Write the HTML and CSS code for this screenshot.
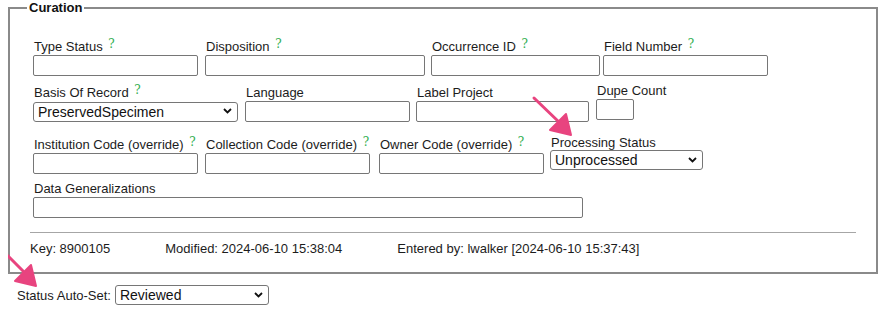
FILE: index.html
```html
<!DOCTYPE html>
<html lang="en">

<head>
    <meta charset="UTF-8">
    <title>Curation</title>
    <link rel="stylesheet" href="styles.css">
</head>

<body>

    <form class="record-form">
        <fieldset class="curation">
            <legend>Curation</legend>

            <div class="field-row">
                <div class="field f-type">
                    <label>Type Status <sup class="help">?</sup></label>
                    <input type="text">
                </div>
                <div class="field f-disp">
                    <label>Disposition <sup class="help">?</sup></label>
                    <input type="text">
                </div>
                <div class="field f-occ">
                    <label>Occurrence ID <sup class="help">?</sup></label>
                    <input type="text">
                </div>
                <div class="field f-fieldnum">
                    <label>Field Number <sup class="help">?</sup></label>
                    <input type="text">
                </div>
            </div>

            <div class="field-row row-2">
                <div class="field f-basis">
                    <label>Basis Of Record <sup class="help">?</sup></label>
                    <span class="select-wrap">
                        <select>
                            <option>PreservedSpecimen</option>
                        </select>
                        <svg class="chevron" width="9" height="6" viewBox="0 0 9 6"><path d="M1 1 L4.5 4.5 L8 1" fill="none" stroke="#111" stroke-width="1.8"/></svg>
                    </span>
                </div>
                <div class="field f-lang">
                    <label>Language</label>
                    <input type="text">
                </div>
                <div class="field f-labelproj">
                    <label>Label Project</label>
                    <input type="text">
                </div>
                <div class="field f-dupe">
                    <label>Dupe Count</label>
                    <input type="text">
                </div>
            </div>

            <div class="field-row row-3">
                <div class="field f-inst">
                    <label>Institution Code (override) <sup class="help">?</sup></label>
                    <input type="text">
                </div>
                <div class="field f-coll">
                    <label>Collection Code (override) <sup class="help">?</sup></label>
                    <input type="text">
                </div>
                <div class="field f-owner">
                    <label>Owner Code (override) <sup class="help">?</sup></label>
                    <input type="text">
                </div>
                <div class="field f-proc">
                    <label>Processing Status</label>
                    <span class="select-wrap">
                        <select>
                            <option>Unprocessed</option>
                        </select>
                        <svg class="chevron" width="9" height="6" viewBox="0 0 9 6"><path d="M1 1 L4.5 4.5 L8 1" fill="none" stroke="#111" stroke-width="1.8"/></svg>
                    </span>
                </div>
            </div>

            <div class="field-row row-4">
                <div class="field f-datagen">
                    <label>Data Generalizations</label>
                    <input type="text">
                </div>
            </div>

            <hr>

            <div class="record-meta">
                <span>Key: 8900105</span>
                <span>Modified: 2024-06-10 15:38:04</span>
                <span>Entered by: lwalker [2024-06-10 15:37:43]</span>
            </div>
        </fieldset>

        <div class="auto-set">
            <label>Status Auto-Set:</label>
            <span class="select-wrap">
                <select>
                    <option>Reviewed</option>
                </select>
                <svg class="chevron" width="9" height="6" viewBox="0 0 9 6"><path d="M1 1 L4.5 4.5 L8 1" fill="none" stroke="#111" stroke-width="1.8"/></svg>
            </span>
        </div>
    </form>

    <!-- annotation arrows -->
    <svg class="annotations" width="887" height="312" viewBox="0 0 887 312">
        <g fill="#e8447f" stroke="#e8447f" stroke-linecap="round" stroke-linejoin="round">
            <line x1="534" y1="98" x2="560" y2="123" stroke-width="3"/>
            <polygon points="571,135 550,130 566,114" stroke-width="2"/>
            <line x1="-2" y1="246" x2="24" y2="272" stroke-width="3"/>
            <polygon points="36,286 15,281 31,265" stroke-width="2"/>
        </g>
    </svg>

</body>

</html>
```

FILE: styles.css
```css
body {
    font-family: "Liberation Sans", Arial, sans-serif;
    font-size: 13px;
    color: #1c1c1c;
    background-color: #fff;
    margin: 0 9px 0 8px;
    position: relative;
}

.curation {
    margin: 0;
    border: 2px solid #8a8a8a;
    padding: 24px 20px 16px 20px;
}

.curation legend {
    font-weight: bold;
    color: #111;
    padding: 0 2px;
    margin-left: -3px;
    line-height: 15px;
}

.field-row {
    display: flex;
    align-items: flex-end;
    padding-left: 3px;
}

.row-2 {
    margin-top: 9px;
}

.row-3 {
    margin-top: 15px;
}

.row-4 {
    margin-top: 7px;
}

.field {
    display: flex;
    flex-direction: column;
    align-items: flex-start;
    flex: none;
}

.field label {
    line-height: 15px;
    height: 15px;
    white-space: nowrap;
    padding-left: 1px;
    margin-bottom: 1px;
}

.help {
    font-family: "DejaVu Serif", "Liberation Serif", serif;
    font-size: 12px;
    color: #2fae4e;
    line-height: 0;
    vertical-align: 3px;
    margin-left: 2px;
}

input[type="text"] {
    box-sizing: border-box;
    width: 165px;
    height: 21px;
    margin: 0;
    padding: 0 3px;
    border: 1px solid #767676;
    border-radius: 2px;
    background: #fff;
    font-family: inherit;
    font-size: 13px;
}

select {
    appearance: none;
    -webkit-appearance: none;
    box-sizing: border-box;
    height: 20px;
    margin: 0;
    padding: 0 20px 0 4px;
    border: 1px solid #767676;
    border-radius: 3px;
    background: #fff;
    color: #111;
    font-family: inherit;
    font-size: 14px;
    line-height: 18px;
}

.select-wrap {
    position: relative;
    display: inline-block;
    line-height: 0;
}

.chevron {
    position: absolute;
    right: 6px;
    top: 7px;
    pointer-events: none;
}

/* per-field widths */
.f-type { width: 172px; }
.f-disp { width: 226px; }
.f-disp input { width: 220px; }
.f-occ { width: 172px; }
.f-occ input { width: 169px; }

.f-basis { width: 212px; }
.f-basis select { width: 205px; margin-top: 1px; }
.f-lang { width: 171px; }
.f-labelproj { width: 180px; }
.f-labelproj input { width: 173px; }
.f-dupe { align-self: flex-start; margin-top: -2px; }
.f-dupe input { width: 38px; }

.f-inst { width: 172px; }
.f-coll { width: 174px; }
.f-owner { width: 171px; }
.f-proc { align-self: flex-start; margin-top: -2px; }
.f-proc label { margin-bottom: 0; }
.f-proc select { width: 153px; }

.f-datagen input { width: 550px; }

hr {
    border: none;
    border-top: 1px solid #a6a6a6;
    margin: 14px 0 8px 0;
}

.record-meta {
    display: flex;
    gap: 55px;
    line-height: 15px;
}

.auto-set {
    display: flex;
    align-items: center;
    gap: 4px;
    margin-top: 11px;
    padding-left: 9px;
}

.auto-set select {
    width: 154px;
}

.annotations {
    position: absolute;
    left: -8px;
    top: 0;
    pointer-events: none;
}
```
